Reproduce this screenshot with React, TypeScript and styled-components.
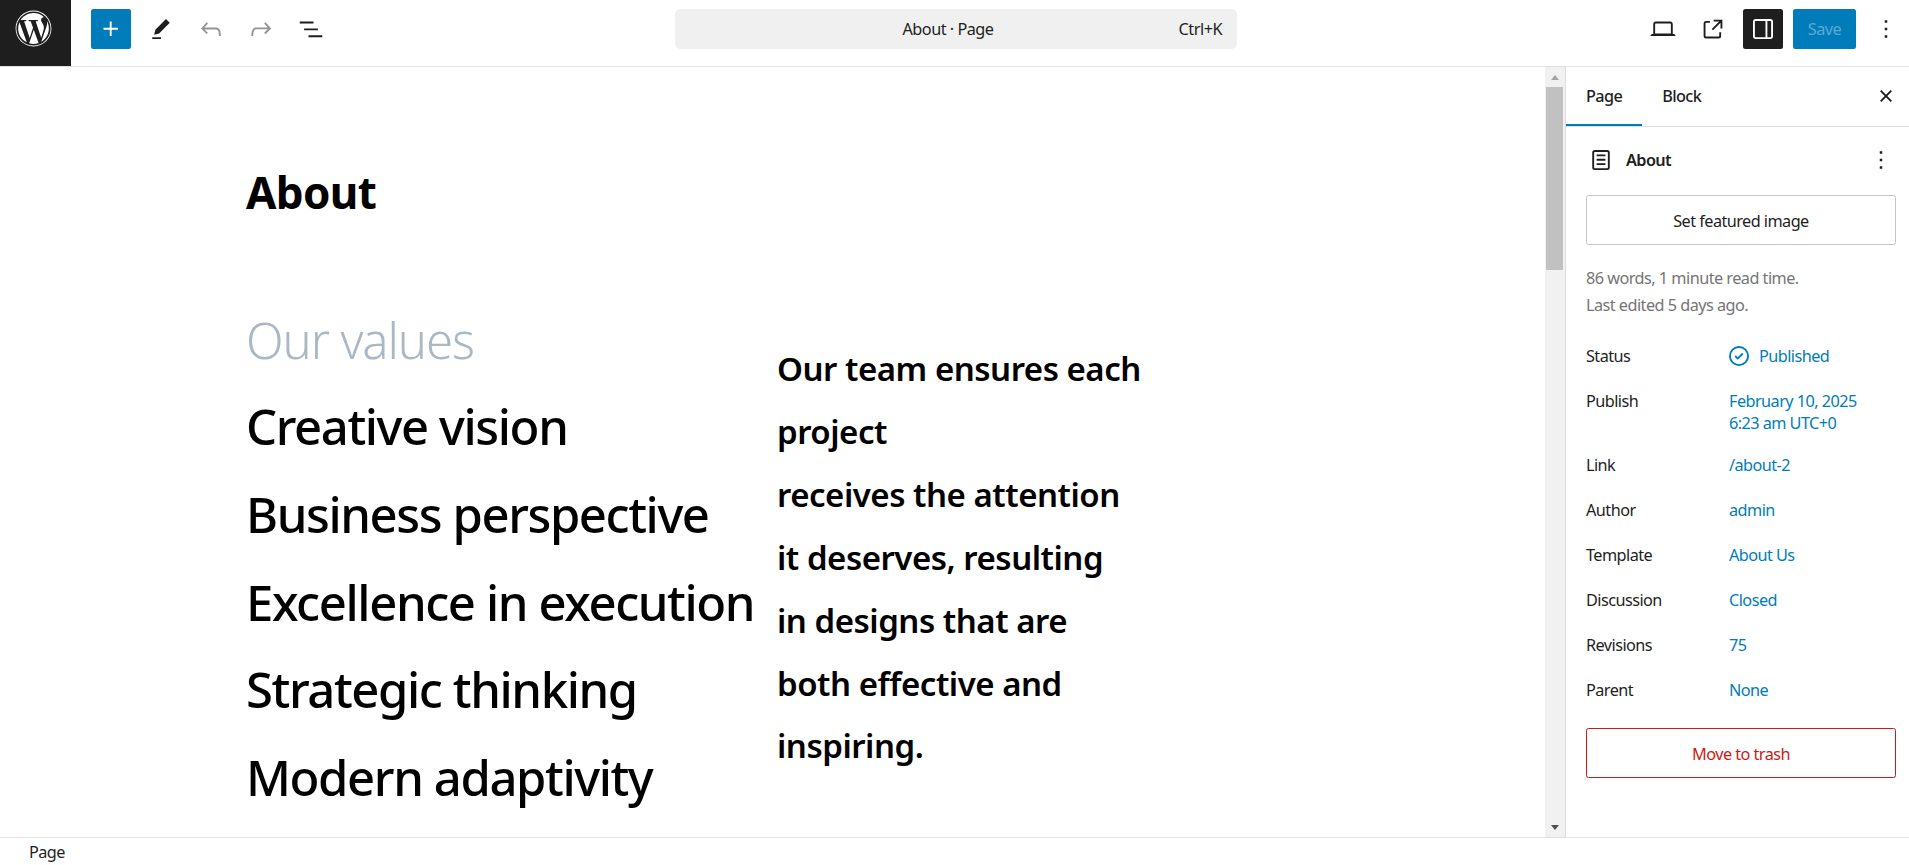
import React from 'react';
import styled, { createGlobalStyle } from 'styled-components';
import { FaWordpress } from 'react-icons/fa';

const GlobalStyle = createGlobalStyle`
    html, body {
        margin: 0;
        padding: 0;
        height: 100%;
        background: #fff;
        overflow: hidden;
    }
    body {
        font-family: "Noto Sans", "Open Sans", "Liberation Sans", sans-serif;
        font-size: 16.25px;
        color: #1e1e1e;
    }
    * { box-sizing: border-box; }
`;

const Page = styled.div`
    height: 865px;
    display: flex;
    flex-direction: column;
`;

const Header = styled.header`
    height: 67px;
    flex: none;
    display: flex;
    align-items: flex-start;
    border-bottom: 1px solid #e0e0e0;
`;

const Logo = styled.div`
    width: 71px;
    height: 66px;
    flex: none;
    background: #1e1e1e;
    color: #fff;
    padding: 10px 4px 0 0;
    display: flex;
    justify-content: center;
`;

const Tools = styled.div`
    width: 604px;
    flex: none;
    padding: 9px 0 0 20px;
    display: flex;
    gap: 10px;
`;

const IconButton = styled.div<{ $tone?: 'primary' | 'dark' | 'muted' }>`
    width: 40px;
    height: 40px;
    flex: none;
    border-radius: 2.5px;
    display: flex;
    align-items: center;
    justify-content: center;
    background: ${(p) => (p.$tone === 'primary' ? '#007cba' : p.$tone === 'dark' ? '#1e1e1e' : 'transparent')};
    color: ${(p) => (p.$tone === 'primary' || p.$tone === 'dark' ? '#fff' : p.$tone === 'muted' ? '#949494' : '#1e1e1e')};
`;

const CommandBar = styled.div`
    width: 562px;
    height: 40px;
    margin-top: 9px;
    padding-right: 16px;
    flex: none;
    background: #f0f0f0;
    border-radius: 5px;
    position: relative;
    display: flex;
    align-items: center;
    justify-content: center;
    letter-spacing: -0.5px;
`;

const Shortcut = styled.span`
    position: absolute;
    right: 15px;
    top: 10px;
    line-height: 20px;
`;

const Actions = styled.div`
    margin-left: auto;
    padding: 9px 3px 0 0;
    display: flex;
    gap: 10px;
`;

const SaveButton = styled.div`
    width: 63px;
    height: 40px;
    background: #007cba;
    border-radius: 2.5px;
    color: #5ea9d3;
    display: flex;
    align-items: center;
    justify-content: center;
    letter-spacing: -0.55px;
`;

const Body = styled.div`
    flex: 1;
    min-height: 0;
    display: flex;
`;

const Canvas = styled.main`
    flex: 1;
    min-width: 0;
    overflow: hidden;
    padding: 95px 0 0 246px;
    color: #000;
`;

const Title = styled.h1`
    margin: 0 0 75px;
    font-size: 44px;
    line-height: 60px;
    font-weight: 700;
    letter-spacing: -0.65px;
`;

const Columns = styled.div`
    display: flex;
`;

const ValuesColumn = styled.div`
    width: 531px;
    flex: none;
`;

const Subheading = styled.div`
    font-size: 49px;
    line-height: 86px;
    font-weight: 300;
    color: #abb8c3;
    letter-spacing: -1.1px;
`;

const ValueLine = styled.div`
    font-size: 49px;
    line-height: 87.75px;
    font-weight: 500;
    letter-spacing: -1.4px;
    white-space: nowrap;
`;

const Blurb = styled.div`
    margin-top: 41px;
    font-size: 33px;
    line-height: 62.9px;
    font-weight: 600;
    letter-spacing: -0.48px;
    white-space: nowrap;
`;

const Scrollbar = styled.div`
    width: 21px;
    flex: none;
    background: #f1f1f1;
    border-right: 1px solid #ddd;
    display: flex;
    flex-direction: column;
    align-items: center;
    padding: 0 1px 0 0;
`;

const ArrowCell = styled.div`
    height: 20px;
    flex: none;
    display: flex;
    align-items: center;
    justify-content: center;
`;

const Arrow = styled.div<{ $down?: boolean }>`
    width: 0;
    height: 0;
    border-left: 4.5px solid transparent;
    border-right: 4.5px solid transparent;
    ${(p) => (p.$down ? 'border-top: 5px solid #505050;' : 'border-bottom: 5px solid #a3a3a3;')}
`;

const Thumb = styled.div`
    width: 17px;
    height: 183px;
    flex: none;
    background: #c1c1c1;
`;

const TrackGap = styled.div`
    flex: 1;
`;

const Sidebar = styled.aside`
    width: 343px;
    flex: none;
    padding-bottom: 20px;
`;

const Tabs = styled.div`
    height: 60px;
    display: flex;
    align-items: stretch;
    position: relative;
    border-bottom: 1px solid #e0e0e0;
`;

const Tab = styled.div<{ $active?: boolean }>`
    padding: 0 20px 2px;
    display: flex;
    align-items: center;
    font-weight: 500;
    letter-spacing: -0.6px;
    box-shadow: ${(p) => (p.$active ? 'inset 0 -2px 0 #007cba' : 'none')};
`;

const CloseButton = styled.div`
    position: absolute;
    right: 8px;
    top: 14px;
    display: flex;
`;

const Panel = styled.div`
    padding: 0 13px 0 20px;
`;

const PageRow = styled.div`
    height: 30px;
    margin-top: 18px;
    display: flex;
    align-items: center;
    gap: 10px;
`;

const PageName = styled.div`
    flex: 1;
    font-weight: 600;
    letter-spacing: -0.6px;
`;

const PageMore = styled.div`
    display: flex;
    margin-right: 0;
`;

const OutlineButton = styled.div<{ $danger?: boolean }>`
    height: 50px;
    padding-top: 1px;
    border-radius: 2.5px;
    border: 1px solid ${(p) => (p.$danger ? '#cc1818' : '#c4c4c4')};
    color: ${(p) => (p.$danger ? '#cc1818' : '#1e1e1e')};
    display: flex;
    align-items: center;
    justify-content: center;
    letter-spacing: -0.55px;
`;

const FeaturedSlot = styled.div`
    margin-top: 20px;
`;

const Note = styled.div`
    margin-top: 20px;
    color: #757575;
    line-height: 26.5px;
    letter-spacing: -0.53px;
`;

const MetaList = styled.div`
    margin-top: 27px;
`;

const MetaRow = styled.div<{ $tall?: boolean }>`
    display: flex;
    height: ${(p) => (p.$tall ? '64px' : '45px')};
    line-height: 22px;
    letter-spacing: -0.55px;
`;

const MetaLabel = styled.div`
    width: 143px;
    flex: none;
`;

const MetaValue = styled.div`
    color: #007cba;
    display: flex;
    align-items: flex-start;
`;

const StatusIcon = styled.span`
    display: flex;
    margin: -4px 5px -4px -5px;
`;

const TrashSlot = styled.div`
    margin-top: 4px;
`;

const Footer = styled.footer`
    height: 28px;
    flex: none;
    border-top: 1px solid #e0e0e0;
    padding: 1px 0 0 29px;
    display: flex;
    align-items: center;
    letter-spacing: -0.6px;
`;

const Glyph = ({ d, size = 30 }: { d: string; size?: number }) => (
    <svg width={size} height={size} viewBox="0 0 24 24" fill="currentColor" fillRule="evenodd" aria-hidden="true">
        <path d={d} />
    </svg>
);

const MORE = 'M13 19h-2v-2h2v2zm0-6h-2v-2h2v2zm0-6h-2V5h2v2z';

const values = ['Creative vision', 'Business perspective', 'Excellence in execution', 'Strategic thinking', 'Modern adaptivity'];

const blurb = ['Our team ensures each', 'project', 'receives the attention', 'it deserves, resulting', 'in designs that are', 'both effective and', 'inspiring.'];

const meta = [
    { label: 'Publish', lines: ['February 10, 2025', '6:23 am UTC+0'] },
    { label: 'Link', lines: ['/about-2'] },
    { label: 'Author', lines: ['admin'] },
    { label: 'Template', lines: ['About Us'] },
    { label: 'Discussion', lines: ['Closed'] },
    { label: 'Revisions', lines: ['75'] },
    { label: 'Parent', lines: ['None'] },
];

export default function App() {
    return (
        <Page>
            <GlobalStyle />
            <Header>
                <Logo><FaWordpress size={37} /></Logo>
                <Tools>
                    <IconButton $tone="primary"><Glyph d="M11 12.5V17.5H12.5V12.5H17.5V11H12.5V6H11V11H6V12.5H11Z" /></IconButton>
                    <IconButton><Glyph d="m19 7-3-3-8.5 8.5-1 4 4-1L19 7Zm-7 11.5H5V20h7v-1.5Z" /></IconButton>
                    <IconButton $tone="muted"><Glyph d="M18.3 11.7c-.6-.6-1.4-.9-2.3-.9H6.7l2.9-3.3-1.1-1-4.5 5L8.5 16l1-1-2.7-2.7H16c.5 0 .9.2 1.3.5 1 1 1 3.4 1 4.5v.3h1.5v-.2c0-1.5 0-4.3-1.5-5.7z" /></IconButton>
                    <IconButton $tone="muted"><Glyph d="M15.6 6.5l-1.1 1 2.9 3.3H8c-.9 0-1.7.3-2.3.9-1.4 1.5-1.4 4.2-1.4 5.6v.2h1.5v-.3c0-1.1 0-3.5 1-4.5.3-.3.7-.5 1.3-.5h9.2L14.5 15l1.1 1.1 4.6-4.6-4.6-5z" /></IconButton>
                    <IconButton><Glyph d="M3 6h11v1.5H3V6Zm3.5 5.5h11V13h-11v-1.5ZM21 17H10v1.5h11V17Z" /></IconButton>
                </Tools>
                <CommandBar>
                    About · Page
                    <Shortcut>Ctrl+K</Shortcut>
                </CommandBar>
                <Actions>
                    <IconButton><Glyph d="M20.5 16h-.7V8c0-1.1-.9-2-2-2H6.2c-1.1 0-2 .9-2 2v8h-.7c-.8 0-1.5.7-1.5 1.5h20c0-.8-.7-1.5-1.5-1.5zM5.7 8c0-.3.2-.5.5-.5h11.6c.3 0 .5.2.5.5v7.6H5.7V8z" /></IconButton>
                    <IconButton><Glyph d="M19.5 4.5h-7V6h4.44l-5.97 5.97 1.06 1.06L18 7.06v4.44h1.5v-7Zm-13 1a2 2 0 0 0-2 2v10a2 2 0 0 0 2 2h10a2 2 0 0 0 2-2v-3H17v3a.5.5 0 0 1-.5.5h-10a.5.5 0 0 1-.5-.5v-10a.5.5 0 0 1 .5-.5h3V5.5h-3Z" /></IconButton>
                    <IconButton $tone="dark"><Glyph d="M18 4H6c-1.1 0-2 .9-2 2v12c0 1.1.9 2 2 2h12c1.1 0 2-.9 2-2V6c0-1.1-.9-2-2-2zM6 18.5c-.3 0-.5-.2-.5-.5V6c0-.3.2-.5.5-.5h8v13H6zm12.5-.5c0 .3-.2.5-.5.5h-2.5v-13H18c.3 0 .5.2.5.5v12z" /></IconButton>
                    <SaveButton>Save</SaveButton>
                    <IconButton><Glyph d={MORE} /></IconButton>
                </Actions>
            </Header>
            <Body>
                <Canvas>
                    <Title>About</Title>
                    <Columns>
                        <ValuesColumn>
                            <Subheading>Our values</Subheading>
                            {values.map((value) => <ValueLine key={value}>{value}</ValueLine>)}
                        </ValuesColumn>
                        <Blurb>
                            {blurb.map((line) => <div key={line}>{line}</div>)}
                        </Blurb>
                    </Columns>
                </Canvas>
                <Scrollbar>
                    <ArrowCell><Arrow /></ArrowCell>
                    <Thumb />
                    <TrackGap />
                    <ArrowCell><Arrow $down /></ArrowCell>
                </Scrollbar>
                <Sidebar>
                    <Tabs>
                        <Tab $active>Page</Tab>
                        <Tab>Block</Tab>
                        <CloseButton><Glyph d="M12 13.06l3.712 3.713 1.061-1.06L13.061 12l3.712-3.712-1.06-1.06L12 10.938 8.288 7.227l-1.061 1.06L10.939 12l-3.712 3.712 1.06 1.061L12 13.061z" /></CloseButton>
                    </Tabs>
                    <Panel>
                        <PageRow>
                            <Glyph d="M15.5 7.5h-7V9h7V7.5Zm-7 3.5h7v1.5h-7V11Zm7 3.5h-7V16h7v-1.5ZM17 4H7a2 2 0 0 0-2 2v12a2 2 0 0 0 2 2h10a2 2 0 0 0 2-2V6a2 2 0 0 0-2-2ZM7 5.5h10a.5.5 0 0 1 .5.5v12a.5.5 0 0 1-.5.5H7a.5.5 0 0 1-.5-.5V6a.5.5 0 0 1 .5-.5Z" />
                            <PageName>About</PageName>
                            <PageMore><Glyph d={MORE} /></PageMore>
                        </PageRow>
                        <FeaturedSlot><OutlineButton>Set featured image</OutlineButton></FeaturedSlot>
                        <Note>
                            <div>86 words, 1 minute read time.</div>
                            <div>Last edited 5 days ago.</div>
                        </Note>
                        <MetaList>
                            <MetaRow>
                                <MetaLabel>Status</MetaLabel>
                                <MetaValue>
                                    <StatusIcon><Glyph d="M12 18.5a6.5 6.5 0 1 1 0-13 6.5 6.5 0 0 1 0 13ZM4 12a8 8 0 1 1 16 0 8 8 0 0 1-16 0Zm11.53-1.47-1.06-1.06L11 12.94l-1.47-1.47-1.06 1.06L11 15.06l4.53-4.53Z" /></StatusIcon>
                                    Published
                                </MetaValue>
                            </MetaRow>
                            {meta.map((row) => (
                                <MetaRow key={row.label} $tall={row.lines.length > 1}>
                                    <MetaLabel>{row.label}</MetaLabel>
                                    <MetaValue>
                                        <div>{row.lines.map((line) => <div key={line}>{line}</div>)}</div>
                                    </MetaValue>
                                </MetaRow>
                            ))}
                        </MetaList>
                        <TrashSlot><OutlineButton $danger>Move to trash</OutlineButton></TrashSlot>
                    </Panel>
                </Sidebar>
            </Body>
            <Footer>Page</Footer>
        </Page>
    );
}
